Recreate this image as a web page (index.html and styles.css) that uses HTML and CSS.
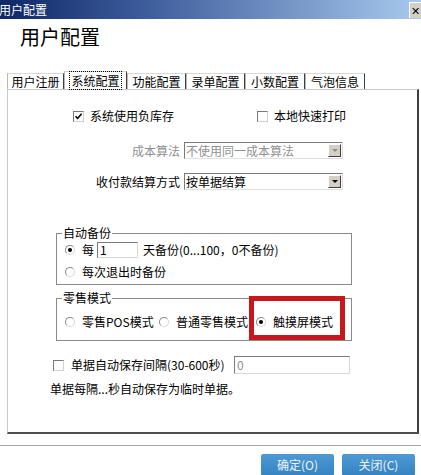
FILE: index.html
```html
<html>
    <head>
        <title>用户配置</title>
        <meta charset="utf-8">
        <link rel="stylesheet" href="styles.css">
    </head>
    <body>
        <div class="titlebar">
            <span class="title">用户配置</span>
            <span class="close">✕</span>
        </div>
        <h1 class="heading">用户配置</h1>
        <nav class="tabs">
            <span class="tab t1">用户注册</span>
            <span class="tab t2 active"><span class="focus">系统配置</span></span>
            <span class="tab t3">功能配置</span>
            <span class="tab t4">录单配置</span>
            <span class="tab t5">小数配置</span>
            <span class="tab t6">气泡信息</span>
        </nav>
        <main class="panel">
            <div class="row checks">
                <label class="item first"><span class="box"><svg width="9" height="9" viewBox="0 0 9 9"><path d="M1.5 4.2 L3.6 6.4 L7.6 1.8" fill="none" stroke="#000" stroke-width="1.6"/></svg></span>系统使用负库存</label>
                <label class="item"><span class="box"></span>本地快速打印</label>
            </div>
            <div class="row field cost">
                <span class="lbl disabled">成本算法</span>
                <span class="select disabled"><span class="val">不使用同一成本算法</span><span class="drop"><i></i></span></span>
            </div>
            <div class="row field pay">
                <span class="lbl">收付款结算方式</span>
                <span class="select"><span class="val">按单据结算</span><span class="drop"><i></i></span></span>
            </div>
            <fieldset class="group backup">
                <legend>自动备份</legend>
                <div class="opt">
                    <span class="radio on"></span><span>每</span>
                    <span class="input days">1</span>
                    <span>天备份(0...100，0不备份)</span>
                </div>
                <div class="opt second">
                    <span class="radio"></span><span>每次退出时备份</span>
                </div>
            </fieldset>
            <div class="markwrap">
                <fieldset class="group retail">
                    <legend>零售模式</legend>
                    <div class="opt modes">
                        <span class="mode m1"><span class="radio"></span>零售POS模式</span>
                        <span class="mode m2"><span class="radio"></span>普通零售模式</span>
                        <span class="mode m3"><span class="radio on"></span>触摸屏模式</span>
                    </div>
                </fieldset>
                <div class="mark"></div>
            </div>
            <div class="row autosave">
                <span class="box"></span>
                <span class="savelbl">单据自动保存间隔(30-600秒)</span>
                <span class="input secs">0</span>
            </div>
            <p class="note">单据每隔...秒自动保存为临时单据。</p>
        </main>
        <hr class="sep">
        <footer class="buttons">
            <span class="btn">确定(O)</span>
            <span class="btn">关闭(C)</span>
        </footer>
    </body>
</html>
```

FILE: styles.css
```css
body{
    margin: 0;
    background: #fff;
    color: #000;
    font-family: "Noto Sans CJK SC", "DejaVu Sans", sans-serif;
    font-size: 12px;
    line-height: 16px;
    overflow: hidden;
}
.titlebar{
    height: 19px;
    display: flex;
    justify-content: space-between;
    align-items: center;
    background: linear-gradient(to right, #0e2766, #3e5d9c 35%, #a8caee);
    color: #fff;
}
.title{
    margin-left: -1px;
    font-size: 12px;
}
.close{
    width: 11px;
    height: 15px;
    background: #d4d0c8;
    border-left: 1px solid #fff;
    border-top: 1px solid #fff;
    color: #000;
    font-size: 11px;
    font-weight: bold;
    line-height: 15px;
    text-align: center;
    overflow: hidden;
}
.heading{
    margin: 8px 0 0 20px;
    font-size: 20px;
    line-height: 20px;
    font-weight: normal;
}
.tabs{
    display: flex;
    align-items: flex-end;
    height: 18px;
    margin: 24px 0 0 7px;
}
.tab{
    height: 16px;
    box-sizing: border-box;
    border-left: 1px solid #b8b8b8;
    border-top: 1px solid #d8d8d8;
    border-right: 1px solid #404040;
    text-align: center;
    line-height: 15px;
    font-size: 12px;
}
.t1{ width: 57px; }
.t2{ width: 63px; }
.t3{ width: 59px; }
.t4{ width: 59px; }
.t5{ width: 60px; }
.t6{ width: 60px; }
.tab.active{
    height: 18px;
    line-height: 17px;
}
.focus{
    outline: 1px dotted #000;
    outline-offset: 0;
    padding: 0 1px;
}
.panel{
    display: block;
    box-sizing: border-box;
    width: 412px;
    height: 345px;
    margin-left: 7px;
    border-left: 1px solid #c8c8c8;
    border-top: 1px solid #c8c8c8;
    border-right: 2px solid #404040;
    border-bottom: 2px solid #505050;
}
.row{
    display: flex;
    align-items: center;
}
.checks{
    margin-top: 18px;
    height: 16px;
}
.item{
    display: flex;
    align-items: center;
}
.item.first{
    margin-left: 65px;
    width: 184px;
}
.box{
    display: inline-flex;
    align-items: center;
    justify-content: center;
    width: 11px;
    height: 11px;
    box-sizing: border-box;
    border: 1px solid #7a7a7a;
    border-right-color: #d0d0d0;
    border-bottom-color: #d0d0d0;
    background: #fff;
    margin-right: 6px;
    flex: none;
}
.field{
    height: 17px;
}
.cost{ margin-top: 18px; }
.pay{ margin-top: 14px; }
.lbl{
    width: 172px;
    text-align: right;
    margin-right: 4px;
}
.disabled{
    color: #909090;
}
.select{
    display: flex;
    box-sizing: border-box;
    width: 159px;
    height: 17px;
    border: 1px solid #7a7a7a;
    border-right-color: #e0e0e0;
    border-bottom-color: #e0e0e0;
    background: #fff;
}
.val{
    flex: 1;
    padding-left: 1px;
    line-height: 15px;
}
.drop{
    width: 13px;
    margin: 1px;
    box-sizing: border-box;
    background: #d4d0c8;
    border: 1px solid #fff;
    border-right-color: #404040;
    border-bottom-color: #404040;
    display: flex;
    align-items: center;
    justify-content: center;
}
.drop i{
    width: 0;
    height: 0;
    border-left: 3px solid transparent;
    border-right: 3px solid transparent;
    border-top: 3px solid #000;
}
.select.disabled .drop i{
    border-top-color: #909090;
}
.group{
    box-sizing: border-box;
    width: 296px;
    margin: 0 0 0 48px;
    padding: 0 0 0 8px;
    border: 1px solid #8a8a8a;
    min-width: 0;
}
.group legend{
    padding: 0 1px;
    margin-left: -3px;
    line-height: 14px;
}
.backup{
    margin-top: 36px;
    padding-top: 2px;
    padding-bottom: 4px;
}
.opt{
    display: flex;
    align-items: center;
    height: 16px;
}
.opt.second{
    margin-top: 6px;
}
.radio{
    display: inline-flex;
    align-items: center;
    justify-content: center;
    width: 10px;
    height: 10px;
    box-sizing: border-box;
    border-radius: 50%;
    border: 1px solid #8a8a8a;
    border-right-color: #d8d8d8;
    border-bottom-color: #d8d8d8;
    background: #fff;
    margin-right: 7px;
    flex: none;
}
.radio.on::after{
    content: "";
    width: 4px;
    height: 4px;
    border-radius: 50%;
    background: #000;
}
.input{
    box-sizing: border-box;
    height: 16px;
    border: 1px solid #7a7a7a;
    border-right-color: #d8d8d8;
    border-bottom-color: #d8d8d8;
    background: #fff;
    padding-left: 2px;
    line-height: 14px;
}
.days{
    width: 41px;
    margin: 0 5px 0 3px;
}
.markwrap{
    position: relative;
    margin-top: 6px;
}
.retail{
    padding-top: 9px;
    padding-bottom: 10px;
}
.mode{
    display: flex;
    align-items: center;
}
.m1{ width: 94px; }
.m2{ width: 97px; }
.mark{
    position: absolute;
    left: 241px;
    top: 5px;
    width: 96px;
    height: 44px;
    box-sizing: border-box;
    border: 5px solid #c8161d;
}
.autosave{
    margin: 15px 0 0 45px;
    height: 18px;
}
.autosave .box{
    margin-right: 7px;
}
.savelbl{
    width: 163px;
}
.secs{
    width: 116px;
    height: 18px;
    color: #909090;
    line-height: 16px;
}
.note{
    margin: 7px 0 0 42px;
    line-height: 16px;
}
.sep{
    margin: 11px 0 0 0;
    border: none;
    border-top: 1px solid #a8a8a8;
    height: 0;
}
.buttons{
    display: flex;
    justify-content: flex-end;
    gap: 8px;
    margin: 8px 6px 0 0;
}
.btn{
    width: 73px;
    height: 22px;
    box-sizing: border-box;
    border-radius: 2px;
    background: linear-gradient(#4e9ad4, #3582c2);
    color: #eef4fa;
    text-align: center;
    line-height: 22px;
}
```
